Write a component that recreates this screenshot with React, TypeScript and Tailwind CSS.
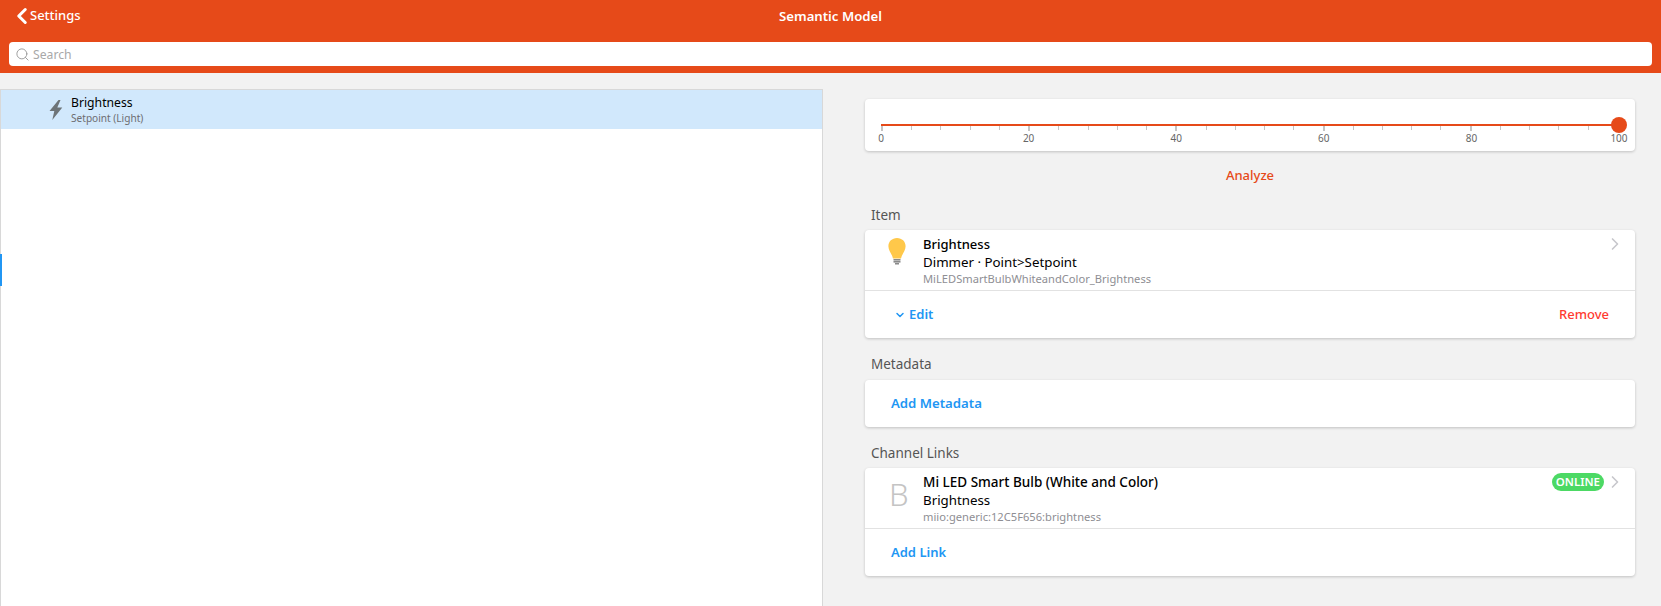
import React from "react";
import { ChevronLeft, ChevronRight, ChevronDown, Search } from "lucide-react";

const ticks = Array.from({ length: 26 }, (_, i) => i * 4);
const labels = [0, 20, 40, 60, 80, 100];

const SectionTitle = ({ children }: { children: React.ReactNode }) => (
  <div className="h-[20px] px-[6px] text-[13.500px] leading-[20px] text-[#555]">{children}</div>
);

const Card = ({ children, className = "" }: { children: React.ReactNode; className?: string }) => (
  <div className={`bg-white rounded-[4px] shadow-[0_1px_3px_rgba(0,0,0,0.2)] ${className}`}>{children}</div>
);

const Slider = () => (
  <Card className="h-[52px] px-[16px] pt-[25px]">
    <div className="relative h-[2px] bg-[#e64a19]">
      <div className="absolute right-[-8px] top-[-7px] w-[16px] h-[16px] rounded-full bg-[#e64a19]" />
    </div>
    <div className="flex justify-between h-[6px]">
      {ticks.map((t) => (
        <div key={t} className={t % 20 === 0 ? "w-[2px] h-[5px] bg-[#c4c4c4]" : "w-[1px] h-[4px] bg-[#c4c4c4]"} />
      ))}
    </div>
    <div className="flex justify-between text-[10px] leading-[12px] text-[#666]">
      {labels.map((l) => (
        <div key={l} className="w-0 flex justify-center">
          <span>{l}</span>
        </div>
      ))}
    </div>
  </Card>
);

const Bulb = () => (
  <svg width="18" height="28" viewBox="0 0 18 28">
    <path d="M9 0C4 0 .4 3.600.4 8.200c0 4.600 3.300 7 4.600 12.300h8c1.300-5.300 4.600-7.700 4.600-12.300C17.600 3.600 14 0 9 0z" fill="#ffc84a" />
    <rect x="5.500" y="21" width="7" height="1.600" fill="#8a8a8a" />
    <rect x="5.500" y="23" width="7" height="1.600" fill="#8a8a8a" />
    <rect x="7" y="25" width="4" height="1.500" fill="#8a8a8a" />
  </svg>
);

const InfoRow = ({
  icon,
  title,
  titleClass,
  subtitle,
  footer,
  badge,
}: {
  icon: React.ReactNode;
  title: string;
  titleClass: string;
  subtitle: string;
  footer: string;
  badge?: string;
}) => (
  <div className="flex h-[61px] border-b border-[#e2e2e2]">
    <div className="w-[58px] pl-[23px] pt-[8px] shrink-0">{icon}</div>
    <div className="flex-1 pt-[5px]">
      <div className={`leading-[18px] font-medium text-black ${titleClass}`}>{title}</div>
      <div className="text-[13.300px] leading-[18px] text-black">{subtitle}</div>
      <div className="text-[11.150px] leading-[16px] text-[#8e8e93]">{footer}</div>
    </div>
    <div className="flex items-start pt-[4px] pr-[10px]">
      {badge && (
        <span className="h-[18px] mt-[1px] mr-[1px] px-[4px] rounded-full bg-[#4cd964] text-white text-[11.500px] leading-[18px] font-semibold">
          {badge}
        </span>
      )}
      <ChevronRight className="w-[20px] h-[20px] text-[#c7c7cc]" strokeWidth={2} />
    </div>
  </div>
);

export default function App() {
  return (
    <div className="h-[606px] overflow-hidden flex flex-col bg-[#f2f2f2] font-['Noto_Sans','Open_Sans',sans-serif]">
      <header className="bg-[#e64a19] h-[73px] shrink-0 flex flex-col">
        <div className="relative h-[33px] mb-[9px] flex items-center justify-center text-white">
          <div className="absolute left-[9px] top-[3px] flex items-center text-[13px] font-medium">
            <ChevronLeft className="w-[26px] h-[26px] mr-[-5px]" strokeWidth={2.800} />
            <span>Settings</span>
          </div>
          <span className="text-[13.200px] font-semibold">Semantic Model</span>
        </div>
        <div className="mx-[9px] h-[24px] bg-white rounded-[4px] flex items-center pl-[6px] gap-[3px] text-[12.200px] text-[#a8a8a8]">
          <Search className="w-[15px] h-[15px] text-[#999]" strokeWidth={1.500} />
          <span className="pt-[3px]">Search</span>
        </div>
      </header>

      <div className="flex flex-1 min-h-0">
        <div className="relative w-[823px] shrink-0 mt-[16px] bg-white border-l border-r border-t border-[#d8d8d8]">
          <div className="absolute left-[-1px] top-[164px] w-[2px] h-[32px] bg-[#2196f3]" />
          <div className="h-[39px] bg-[#d1e8fc] flex items-center pl-[48px]">
            <svg width="14" height="20" viewBox="0 0 14 20" className="shrink-0">
              <path d="M9.500 0L.5 11h4.800L3.300 20l10-12.500H8.300L11.500 0z" fill="#6d7478" />
            </svg>
            <div className="ml-[8px] pt-[1px]">
              <div className="text-[12.200px] leading-[16px] text-black">Brightness</div>
              <div className="text-[10.100px] leading-[15px] text-[#6d6d72]">Setpoint (Light)</div>
            </div>
          </div>
        </div>

        <div className="flex-1 pl-[42px] pr-[26px] pt-[26px]">
          <Slider />
          <div className="h-[18px] mt-[15px] text-center text-[13px] leading-[18px] font-medium text-[#e64a19]">Analyze</div>

          <div className="mt-[21px]">
            <SectionTitle>Item</SectionTitle>
            <Card className="mt-[5px]">
              <InfoRow
                icon={<Bulb />}
                title="Brightness"
                titleClass="text-[13px]"
                subtitle="Dimmer · Point>Setpoint"
                footer="MiLEDSmartBulbWhiteandColor_Brightness"
              />
              <div className="h-[47px] flex items-center justify-between pl-[29px] pr-[26px] text-[13px]">
                <div className="flex items-center font-semibold text-[#2196f3]">
                  <ChevronDown className="w-[12px] h-[12px] mr-[3px]" strokeWidth={3} />
                  Edit
                </div>
                <span className="font-medium text-[#ff3b30]">Remove</span>
              </div>
            </Card>
          </div>

          <div className="mt-[16px]">
            <SectionTitle>Metadata</SectionTitle>
            <Card className="mt-[6px] h-[47px] flex items-center pl-[26px] text-[13.200px] font-semibold text-[#2196f3]">
              Add Metadata
            </Card>
          </div>

          <div className="mt-[16px]">
            <SectionTitle>Channel Links</SectionTitle>
            <Card className="mt-[5px]">
              <InfoRow
                icon={<span className="block pl-[1px] text-[31px] leading-[36px] font-light text-[#c4c4c4]">B</span>}
                title="Mi LED Smart Bulb (White and Color)"
                titleClass="text-[13.500px]"
                subtitle="Brightness"
                footer="miio:generic:12C5F656:brightness"
                badge="ONLINE"
              />
              <div className="h-[47px] flex items-center pl-[26px] text-[13px] font-semibold text-[#2196f3]">Add Link</div>
            </Card>
          </div>
        </div>
      </div>
    </div>
  );
}
